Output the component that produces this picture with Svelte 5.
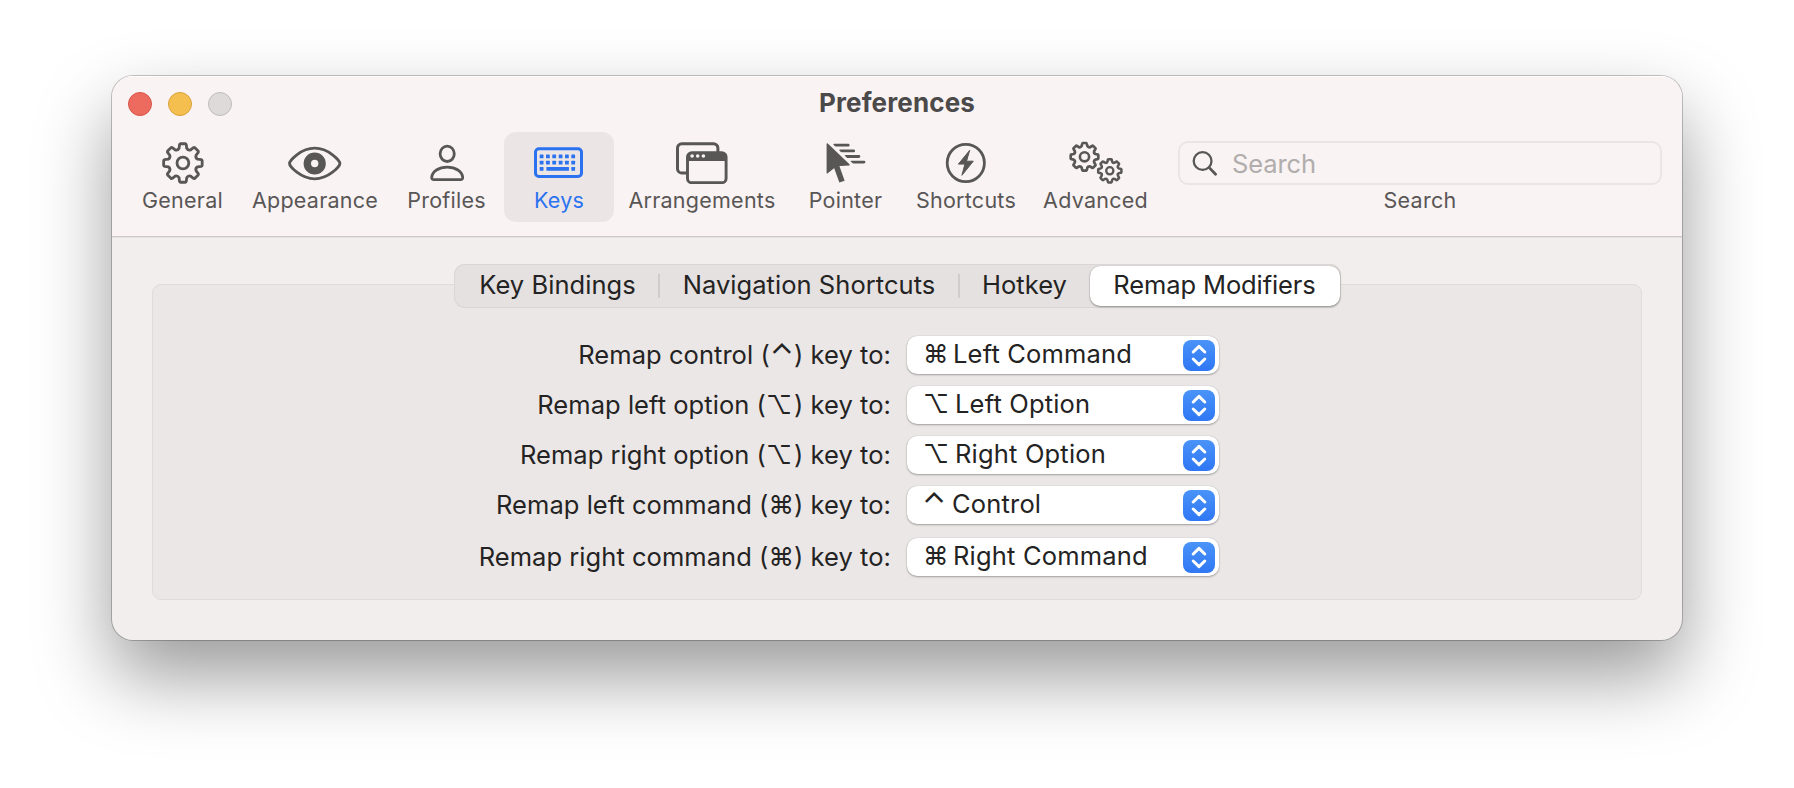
<script>
  // Outline of an eight-toothed gear centred on (cx, cy).
  function gear(cx, cy, outer, root) {
    const pt = (r, deg) => {
      const a = ((deg - 90) * Math.PI) / 180;
      return `${(cx + r * Math.cos(a)).toFixed(2)} ${(cy + r * Math.sin(a)).toFixed(2)}`;
    };
    let d = '';
    for (let k = 0; k < 8; k++) {
      const a = k * 45;
      d += `${k ? 'L' : 'M'}${pt(root + 1.2 * (outer / 19.4), a - 14.5)}`;
      d += `L${pt(outer - 0.8, a - 10.5)}Q${pt(outer, a - 9.5)} ${pt(outer, a - 7)}`;
      d += `L${pt(outer, a + 7)}Q${pt(outer, a + 9.5)} ${pt(outer - 0.8, a + 10.5)}`;
      d += `L${pt(root + 1.2 * (outer / 19.4), a + 14.5)}`;
      d += `Q${pt(root - 0.6, a + 22.5)} ${pt(root + 1.2 * (outer / 19.4), a + 30.5)}`;
    }
    return d + 'Z';
  }

  const tools = ['General', 'Appearance', 'Profiles', 'Keys', 'Arrangements', 'Pointer', 'Shortcuts', 'Advanced'];
  const tabs = ['Key Bindings', 'Navigation Shortcuts', 'Hotkey', 'Remap Modifiers'];
  const rows = [
    { name: 'control', symbol: '⌃', valueSymbol: '⌘', value: 'Left Command' },
    { name: 'left option', symbol: '⌥', valueSymbol: '⌥', value: 'Left Option' },
    { name: 'right option', symbol: '⌥', valueSymbol: '⌥', value: 'Right Option' },
    { name: 'left command', symbol: '⌘', valueSymbol: '⌃', value: 'Control' },
    { name: 'right command', symbol: '⌘', valueSymbol: '⌘', value: 'Right Command' }
  ];
  const keyColumns = [10.7, 17, 23.3, 29.7, 36, 42.3];
</script>

<div class="window">
  <header>
    <div class="titlebar">
      <div class="lights"><i class="close"></i><i class="minimize"></i><i class="zoom"></i></div>
      <h1>Preferences</h1>
    </div>
    <nav>
      {#each tools as tool}
        <button class="tool" class:active={tool === 'Keys'}>
          <svg width="60" height="44" viewBox="0 0 60 44" fill="none" stroke="currentColor" stroke-width="2.8" stroke-linejoin="round" stroke-linecap="round">
            {#if tool === 'General'}
              <path d={gear(29.9, 23, 19.4, 14)} />
              <circle cx="29.9" cy="23" r="5.9" />
            {:else if tool === 'Appearance'}
              <path d="M4.5 23.5C4.5 20.8 15.7 8.2 29.7 8.2S54.9 20.8 54.9 23.5S43.7 38.8 29.7 38.8S4.5 26.2 4.5 23.5Z" />
              <circle cx="29.7" cy="23.5" r="7.4" stroke-width="7.4" />
            {:else if tool === 'Profiles'}
              <ellipse cx="30.2" cy="13.8" rx="7.1" ry="7.7" />
              <path d="M17 39.7C15.3 39.7 14.6 38.9 14.7 37.4C15.3 31.2 21.7 27.2 30.2 27.2S45.1 31.2 45.7 37.4C45.8 38.9 45.1 39.7 43.4 39.7Z" />
            {:else if tool === 'Keys'}
              <rect x="6.5" y="8.7" width="46" height="27.8" rx="3.4" stroke-width="3" />
              <g fill="currentColor" stroke="none">
                {#each keyColumns as x}
                  <rect {x} y="14.5" width="3.8" height="3.8" rx="0.5" />
                  <rect {x} y="20.7" width="3.8" height="3.8" rx="0.5" />
                {/each}
                <rect x="10.7" y="27" width="3.8" height="3.8" rx="0.5" />
                <rect x="17.4" y="27" width="22.6" height="3.8" rx="0.5" />
                <rect x="42.3" y="27" width="3.8" height="3.8" rx="0.5" />
              </g>
            {:else if tool === 'Arrangements'}
              <path d="M15 33H9.8A4.3 4.3 0 0 1 5.5 28.7V8A4.3 4.3 0 0 1 9.8 3.7H41.6A4.3 4.3 0 0 1 45.9 8V12" stroke-linecap="butt" stroke-width="3" />
              <rect x="15.5" y="12.7" width="38.6" height="30" rx="4.3" stroke-width="2.9" />
              <path d="M15 21V16.5A4 4 0 0 1 19 12.5H51A4 4 0 0 1 55 16.5V21Z" fill="currentColor" stroke="none" />
              <g class="dots" stroke="none">
                <circle cx="20.1" cy="16" r="1.8" /><circle cx="25.7" cy="16" r="1.8" /><circle cx="31.4" cy="16" r="1.8" />
              </g>
            {:else if tool === 'Pointer'}
              <path d="M11.3 4L33 24.7L23.6 25.4L18.8 26.8L11.3 32.8Z" fill="currentColor" stroke-width="1.4" />
              <path d="M20.2 25.5L26 41.6" stroke-width="5.6" stroke-linecap="butt" />
              <path d="M18.5 5.2H32.2M24.4 10.9H37.7M29.8 16.5H42.9M35.5 22.1H48" stroke-width="2.8" />
              <path d="M14.5 3.2L37 24.8" class="gap" stroke-width="1.8" stroke-linecap="butt" />
            {:else if tool === 'Shortcuts'}
              <circle cx="29.8" cy="23" r="18.6" />
              <path d="M33.5 10.6L22.4 24.1H28.9L25.9 35.3L37.3 21.2H30.8Z" fill="currentColor" stroke-width="1" />
            {:else}
              <path d={gear(18.5, 16.8, 13.9, 10.4)} stroke-width="2.7" />
              <circle cx="18.5" cy="16.8" r="4.6" stroke-width="2.6" />
              <path d={gear(43.8, 30.8, 11.7, 8.7)} stroke-width="2.5" />
              <circle cx="43.8" cy="30.8" r="3.6" stroke-width="2.3" />
            {/if}
          </svg>
          <span>{tool}</span>
        </button>
      {/each}
      <label class="search">
        <span class="field">
          <svg width="28" height="28" viewBox="0 0 28 28" fill="none" stroke="#595656" stroke-linecap="round">
            <circle cx="11.6" cy="12" r="8.9" stroke-width="2.3" />
            <path d="M18.2 18.6L24.6 25.2" stroke-width="2.8" />
          </svg>
          <span class="placeholder">Search</span>
        </span>
        <span>Search</span>
      </label>
    </nav>
  </header>
  <main>
    <div class="tabs">
      {#each tabs as tab, i}
        <button class:selected={i === 3}>{tab}</button>
      {/each}
    </div>
    <section>
      {#each rows as row}
        <div class="row">
          <span class="label">Remap {row.name} (<span class:caret={row.symbol === '⌃'} class:alt={row.symbol === '⌥'}>{row.symbol}</span>) key to:</span>
          <button class="select">
            <span class="symbol" class:option={row.valueSymbol === '⌥'} class:control={row.valueSymbol === '⌃'}><span class:caret={row.valueSymbol === '⌃'}>{row.valueSymbol}</span></span>
            <span class="value">{row.value}</span>
            <span class="stepper">
              <svg width="32" height="31" viewBox="0 0 32 31" fill="none" stroke="#fff" stroke-width="3" stroke-linecap="round" stroke-linejoin="round">
                <path d="M10.2 12L16 6.4L21.8 12M10.2 19L16 24.6L21.8 19" />
              </svg>
            </span>
          </button>
        </div>
      {/each}
    </section>
  </main>
</div>

<style>
  :global(body) { background: #fff; }
  :global(#app) { box-sizing: border-box; height: 100vh; overflow: hidden; padding: 76px 112px 0; }
  button { border: 0; background: none; padding: 0; margin: 0; font: inherit; color: inherit; letter-spacing: inherit; }
  .window {
    height: 564px;
    box-sizing: border-box;
    border-radius: 21px;
    background: #f2eeed;
    overflow: hidden;
    color: #242323;
    font: 25.5px/32px Inter, "Liberation Sans", sans-serif;
    letter-spacing: 0.05px;
    box-shadow: 0 0 0 1px rgba(0, 0, 0, 0.22), 0 36px 76px rgba(0, 0, 0, 0.4);
  }
  header {
    height: 161px;
    box-sizing: border-box;
    background: #f9f3f3;
    border-bottom: 1px solid #cfcac9;
    box-shadow: inset 0 1px #fff, 0 1px #e6e2e1;
  }
  .titlebar { height: 56px; display: grid; grid-template-columns: 1fr auto 1fr; align-items: center; }
  .lights { display: flex; gap: 16px; padding-left: 16px; }
  .lights i { width: 24px; height: 24px; box-sizing: border-box; border-radius: 50%; border: 1px solid; }
  .lights .close { background: #ed6a5e; border-color: #d5544a; }
  .lights .minimize { background: #f5bf4f; border-color: #d8a13c; }
  .lights .zoom { background: #dfdada; border-color: #c0bbbb; }
  h1 { margin: 0; padding-bottom: 2px; font-size: 26px; line-height: 32px; font-weight: 700; letter-spacing: 0.15px; color: #4b4949; }
  nav {
    display: grid;
    grid-template-columns: 117px 148px 115px 110px 176px 111px 130px 129px 484px;
    height: 90px;
    padding-left: 12px;
    color: #595656;
    font-size: 21.5px;
    line-height: 26px;
    letter-spacing: 0.25px;
  }
  .tool { display: flex; flex-direction: column; align-items: center; padding-top: 8px; gap: 3px; border-radius: 12px; }
  .tool svg { display: block; flex: none; }
  .active { background: #ebe6e5; color: #2b72f0; }
  .dots { fill: #f9f3f3; }
  .gap { stroke: #f9f3f3; }
  .search { display: flex; flex-direction: column; align-items: center; margin-left: 18px; width: 484px; padding-top: 9px; gap: 2px; }
  .field { width: 484px; height: 44px; box-sizing: border-box; border: 2px solid #ebe6e5; border-radius: 10px; display: flex; align-items: center; padding-left: 11px; }
  .placeholder { margin-left: 13px; padding-top: 1px; font-size: 25.5px; line-height: 32px; letter-spacing: -0.1px; color: #b1adac; }
  main { padding: 27px 40px 0; display: flex; flex-direction: column; align-items: center; }
  .tabs {
    position: relative;
    z-index: 1;
    box-sizing: border-box;
    width: 887px;
    height: 44px;
    margin-left: 1px;
    padding: 2px;
    border-radius: 11px;
    background: #e5e1e0;
    box-shadow: inset 0 0 0 1px #dad6d5;
    display: grid;
    grid-template-columns: 203px 300px 131px 250px;
  }
  .tabs button { position: relative; padding-bottom: 3px; white-space: nowrap; }
  .tabs .selected { background: #fff; border-radius: 10px; letter-spacing: -0.1px; padding-right: 1px; box-shadow: 0 1px 2px rgba(0, 0, 0, 0.35), 0 0 1px rgba(0, 0, 0, 0.3); }
  .tabs button:nth-child(-n + 2)::after { content: ''; position: absolute; right: -1px; top: 8px; width: 2px; height: 24px; background: #d0cccb; }
  section {
    width: 1490px;
    height: 316px;
    box-sizing: border-box;
    margin-top: -24px;
    padding-top: 51px;
    border: 1px solid #e0dcdb;
    border-radius: 9px;
    background: #ebe7e6;
    display: flex;
    flex-direction: column;
    gap: 12px;
  }
  .row { display: grid; grid-template-columns: 738px 312px; grid-template-rows: 38px; column-gap: 16px; height: 38px; }
  .row:last-child { margin-top: 2px; }
  .label { text-align: right; line-height: 38px; white-space: pre; }
  .caret { font-size: 31px; line-height: 1px; vertical-align: -2px; }
  .alt { padding-right: 2px; }
  .select {
    display: flex;
    align-items: center;
    background: #fff;
    border-radius: 10px;
    box-shadow: 0 1px 2px rgba(0, 0, 0, 0.3), 0 0 1px rgba(0, 0, 0, 0.25);
    padding: 0 4px 0 16px;
    text-align: left;
  }
  .symbol { width: 30px; padding-bottom: 2px; }
  .symbol.option { width: 32px; }
  .symbol.control { width: 29px; }
  .symbol .caret { margin-left: -1px; }
  .value { flex: 1; white-space: nowrap; padding-bottom: 2px; letter-spacing: 0.18px; }
  .stepper { width: 32px; height: 31px; margin-top: 1px; border-radius: 8px; background: linear-gradient(#4a93f8, #2f77f4); }
  .stepper svg { display: block; }
</style>
